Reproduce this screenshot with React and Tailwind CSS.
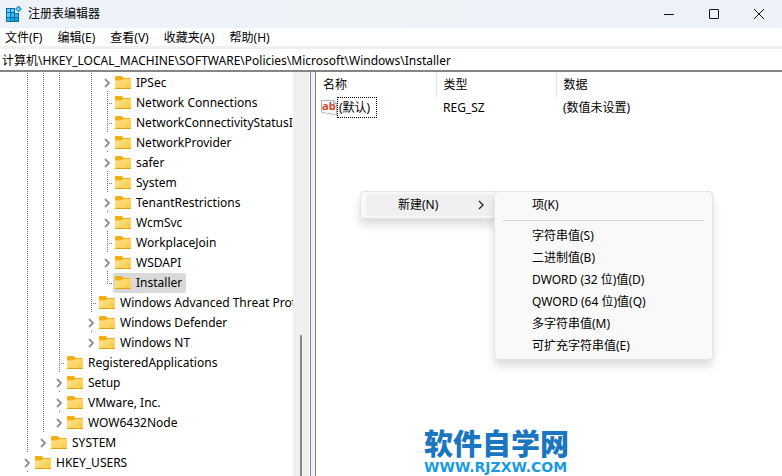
const tree = [
  { label: "IPSec", cells: ["line", "line", "line", "none", "line", "more"] },
  { label: "Network Connections", cells: ["line", "line", "line", "none", "line", "tee"] },
  { label: "NetworkConnectivityStatusIndicator", cells: ["line", "line", "line", "none", "line", "tee"] },
  { label: "NetworkProvider", cells: ["line", "line", "line", "none", "line", "more"] },
  { label: "safer", cells: ["line", "line", "line", "none", "line", "more"] },
  { label: "System", cells: ["line", "line", "line", "none", "line", "tee"] },
  { label: "TenantRestrictions", cells: ["line", "line", "line", "none", "line", "more"] },
  { label: "WcmSvc", cells: ["line", "line", "line", "none", "line", "more"] },
  { label: "WorkplaceJoin", cells: ["line", "line", "line", "none", "line", "tee"] },
  { label: "WSDAPI", cells: ["line", "line", "line", "none", "line", "more"] },
  { label: "Installer", cells: ["line", "line", "line", "none", "line", "end"], selected: true },
  { label: "Windows Advanced Threat Protection", cells: ["line", "line", "line", "none", "tee"] },
  { label: "Windows Defender", cells: ["line", "line", "line", "none", "more"] },
  { label: "Windows NT", cells: ["line", "line", "line", "none", "last"] },
  { label: "RegisteredApplications", cells: ["line", "line", "tee"] },
  { label: "Setup", cells: ["line", "line", "more"] },
  { label: "VMware, Inc.", cells: ["line", "line", "more"] },
  { label: "WOW6432Node", cells: ["line", "line", "last"] },
  { label: "SYSTEM", cells: ["line", "last"] },
  { label: "HKEY_USERS", cells: ["more"] },
];

const menus = ["文件(F)", "编辑(E)", "查看(V)", "收藏夹(A)", "帮助(H)"];

const valueTypes = [
  "字符串值(S)",
  "二进制值(B)",
  "DWORD (32 位)值(D)",
  "QWORD (64 位)值(Q)",
  "多字符串值(M)",
  "可扩充字符串值(E)",
];

function RegistryIcon() {
  return (
    <svg width="16" height="16" viewBox="0 0 16 16" aria-hidden="true">
      <path d="M0 2h9v5h4v9H0z" fill="#0a6fa8" />
      <path d="M1 3h3v3H1zM5 3h3v3H5zM1 7h3v4H1z" fill="#5fd0f7" />
      <path d="M5 7h3v4H5zM9 8h3v3H9zM1 12h3v3H1z" fill="#35b6ec" />
      <path d="M5 12h3v3H5zM9 12h3v3H9z" fill="#1a9ddb" />
      <path d="M12.500 0l3 3-3 3-3-3z" fill="#2b9fd8" stroke="#0d6ea6" strokeWidth="0.6" />
      <path d="M12.500 1.500l1.500 1.500-1.500 1.500-1.500-1.500z" fill="#7fdcfa" />
    </svg>
  );
}

function FolderIcon() {
  return (
    <svg className="shrink-0" width="16" height="14" viewBox="0 0 16 14" aria-hidden="true">
      <defs>
        <linearGradient id="folder" x1="0" y1="0" x2="1" y2="1">
          <stop offset="0" stopColor="#ffe596" />
          <stop offset="1" stopColor="#fdc93c" />
        </linearGradient>
      </defs>
      <path d="M0 1Q0 0 1 0h6l1.500 2H15q1 0 1 1v5H0z" fill="#f2b010" />
      <path d="M0 4.500h6.500l1.500-1.500h8v9q0 1-1 1H1q-1 0-1-1z" fill="url(#folder)" />
      <path d="M0 12q0 1 1 1h14q1 0 1-1z" fill="#e2a012" />
    </svg>
  );
}

function StringIcon() {
  return (
    <svg className="shrink-0" width="16" height="16" viewBox="0 0 16 16" aria-hidden="true">
      <path d="M.5.500h12l3 3v12l-2-1.500-2 1-2.500-2-2.500 1-2-1.500-2 .5-2-1z" fill="#fafafa" stroke="#b4b4b4" />
      <path d="M12.500.5v3h3" fill="none" stroke="#b4b4b4" />
      <text x="1" y="10" fill="#d8431f" className="font-['Open_Sans'] text-[11px] font-bold">ab</text>
    </svg>
  );
}

function Chevron({ className, weight }) {
  return (
    <svg className={className} width="6" height="10" viewBox="0 0 6 10" fill="none" stroke="currentColor" strokeWidth={weight} aria-hidden="true">
      <path d="M1 1l4 4-4 4" />
    </svg>
  );
}

const dotsDown = "w-px shrink-0 bg-[repeating-linear-gradient(to_bottom,#777_0_1px,transparent_1px_2px)]";
const dotsAcross = "h-px grow bg-[repeating-linear-gradient(to_right,transparent_0_1px,#777_1px_2px)]";

function Cell({ kind, inner }) {
  const width = inner ? "w-4" : "w-[14px]";
  if (kind === "more" || kind === "last") {
    return (
      <span className={`flex h-5 shrink-0 flex-col pt-[5px] pl-[5px] ${width}`}>
        <Chevron className="shrink-0 text-[#8f8f8f]" weight={1.8} />
        {kind === "more" && <span className={`mt-[3px] ml-[3px] h-0.5 ${dotsDown}`} />}
      </span>
    );
  }
  return (
    <span className={`flex h-5 shrink-0 pl-2 ${width}`}>
      {(kind === "line" || kind === "tee") && <span className={`h-5 ${dotsDown}`} />}
      {kind === "end" && <span className={`h-[11px] ${dotsDown}`} />}
      {(kind === "tee" || kind === "end") && <span className={`mt-[10px] ${dotsAcross}`} />}
    </span>
  );
}

function TreePane() {
  return (
    <nav aria-label="注册表项" className="flex w-[310px] shrink-0 border-r border-white">
      <ul className="min-w-0 grow overflow-hidden pt-px">
        {tree.map((node) => (
          <li key={node.label} className="flex h-5 pl-[19px]">
            {node.cells.map((kind, i) => (
              <Cell key={i} kind={kind} inner={i < node.cells.length - 1} />
            ))}
            <button
              type="button"
              className={`flex h-5 shrink-0 items-center gap-[5px] rounded-xs pr-1 pl-0.5 leading-5 whitespace-nowrap ${
                node.selected ? "bg-[#d9d9d9]" : ""
              }`}
            >
              <FolderIcon />
              {node.label}
            </button>
          </li>
        ))}
      </ul>
      <div className="flex w-4 shrink-0 flex-col bg-[#f0f0f0] pt-[263px] pl-[7px]">
        <div className="w-0.5 grow rounded-t-sm bg-[#858585]" />
      </div>
    </nav>
  );
}

function MenuItem({ children, active, arrow }) {
  return (
    <button
      type="button"
      role="menuitem"
      className={`flex h-[22px] w-full items-center justify-between rounded-sm pr-[11px] pl-8 text-left ${
        active ? "bg-[#f0f0f0]" : ""
      }`}
    >
      <span>{children}</span>
      {arrow && <Chevron className="text-[#222]" weight={1.3} />}
    </button>
  );
}

export default function App() {
  return (
    <div className="relative flex h-screen flex-col overflow-hidden bg-white font-['Noto_Sans','Noto_Sans_CJK_SC',sans-serif] text-[12px] text-black">
      <header className="flex h-7 shrink-0 items-center bg-gradient-to-r from-[#eef3fb] via-[#edf3f6] to-[#edf2fb] pr-px pl-[6px]">
        <RegistryIcon />
        <h1 className="grow pl-[6px] leading-6">注册表编辑器</h1>
        <button type="button" aria-label="最小化" className="flex h-6 w-[45px] items-center justify-center">
          <svg width="10" height="10" viewBox="0 0 10 10" stroke="#111"><path d="M0 5.500h10" /></svg>
        </button>
        <button type="button" aria-label="最大化" className="flex h-6 w-[45px] items-center justify-center">
          <svg width="10" height="10" viewBox="0 0 10 10" fill="none" stroke="#111"><rect x=".5" y=".5" width="9" height="9" rx=".5" /></svg>
        </button>
        <button type="button" aria-label="关闭" className="flex h-6 w-[45px] items-center justify-center">
          <svg width="10" height="10" viewBox="0 0 10 10" stroke="#111"><path d="M0 0l10 10M10 0L0 10" /></svg>
        </button>
      </header>

      <nav aria-label="菜单栏" className="flex h-[18px] shrink-0 items-center gap-[15px] pl-[5px]">
        {menus.map((m) => (
          <button key={m} type="button" className="pt-0.5 leading-[18px]">{m}</button>
        ))}
      </nav>

      <div className="flex shrink-0 border-t-3 border-b-2 border-t-[#f0f0f0] border-b-[#858588]">
        <input
          aria-label="地址"
          className="h-[21px] grow bg-white pl-0.5 text-[12px] outline-none"
          defaultValue="计算机\HKEY_LOCAL_MACHINE\SOFTWARE\Policies\Microsoft\Windows\Installer"
        />
      </div>

      <div className="flex min-h-0 grow">
        <TreePane />
        <div className="w-[6px] shrink-0 border-x border-[#828790] bg-[#f0f0f0]" />
        <main className="min-w-0 grow">
          <table className="w-full table-fixed text-left">
            <thead>
              <tr className="h-[25px]">
                <th className="w-[120px] border-r border-[#e5e5e5] pl-[7px] font-normal">名称</th>
                <th className="w-[120px] border-r border-[#e5e5e5] pl-[7px] font-normal">类型</th>
                <th className="pl-[7px] font-normal">数据</th>
              </tr>
            </thead>
            <tbody>
              <tr>
                <td className="pl-[5px]">
                  <span className="flex items-center">
                    <StringIcon />
                    <span className="h-[21px] border border-dotted border-black pr-[6px] pl-px leading-[19px]">(默认)</span>
                  </span>
                </td>
                <td className="pl-[7px]">REG_SZ</td>
                <td className="pl-[7px]">(数值未设置)</td>
              </tr>
            </tbody>
          </table>
        </main>
      </div>

      <div role="menu" className="absolute top-[191px] left-[360px] w-[140px] rounded-sm border border-[#e4e4e4] bg-[#f9f9f9] py-0.5 pr-1 pl-[5px] shadow-[0_6px_10px_rgba(0,0,0,0.14)]">
        <MenuItem active arrow>新建(N)</MenuItem>
      </div>
      <div role="menu" className="absolute top-[191px] left-[494px] w-[219px] rounded-sm border border-[#e4e4e4] bg-[#f9f9f9] px-[5px] py-0.5 shadow-[0_6px_10px_rgba(0,0,0,0.14)]">
        <MenuItem>项(K)</MenuItem>
        <hr className="mx-[3px] my-1 border-[#d4d4d4]" />
        {valueTypes.map((t) => (
          <MenuItem key={t}>{t}</MenuItem>
        ))}
      </div>

      <div className="absolute top-[428px] left-[424px] flex flex-col">
        <strong className="text-[29px] leading-[32px] font-black text-[#1a76bf]">软件自学网</strong>
        <span className="font-['DejaVu_Sans'] text-[14px] leading-[14px] font-bold text-[#1a9be0]">WWW.RJZXW.COM</span>
      </div>
    </div>
  );
}
